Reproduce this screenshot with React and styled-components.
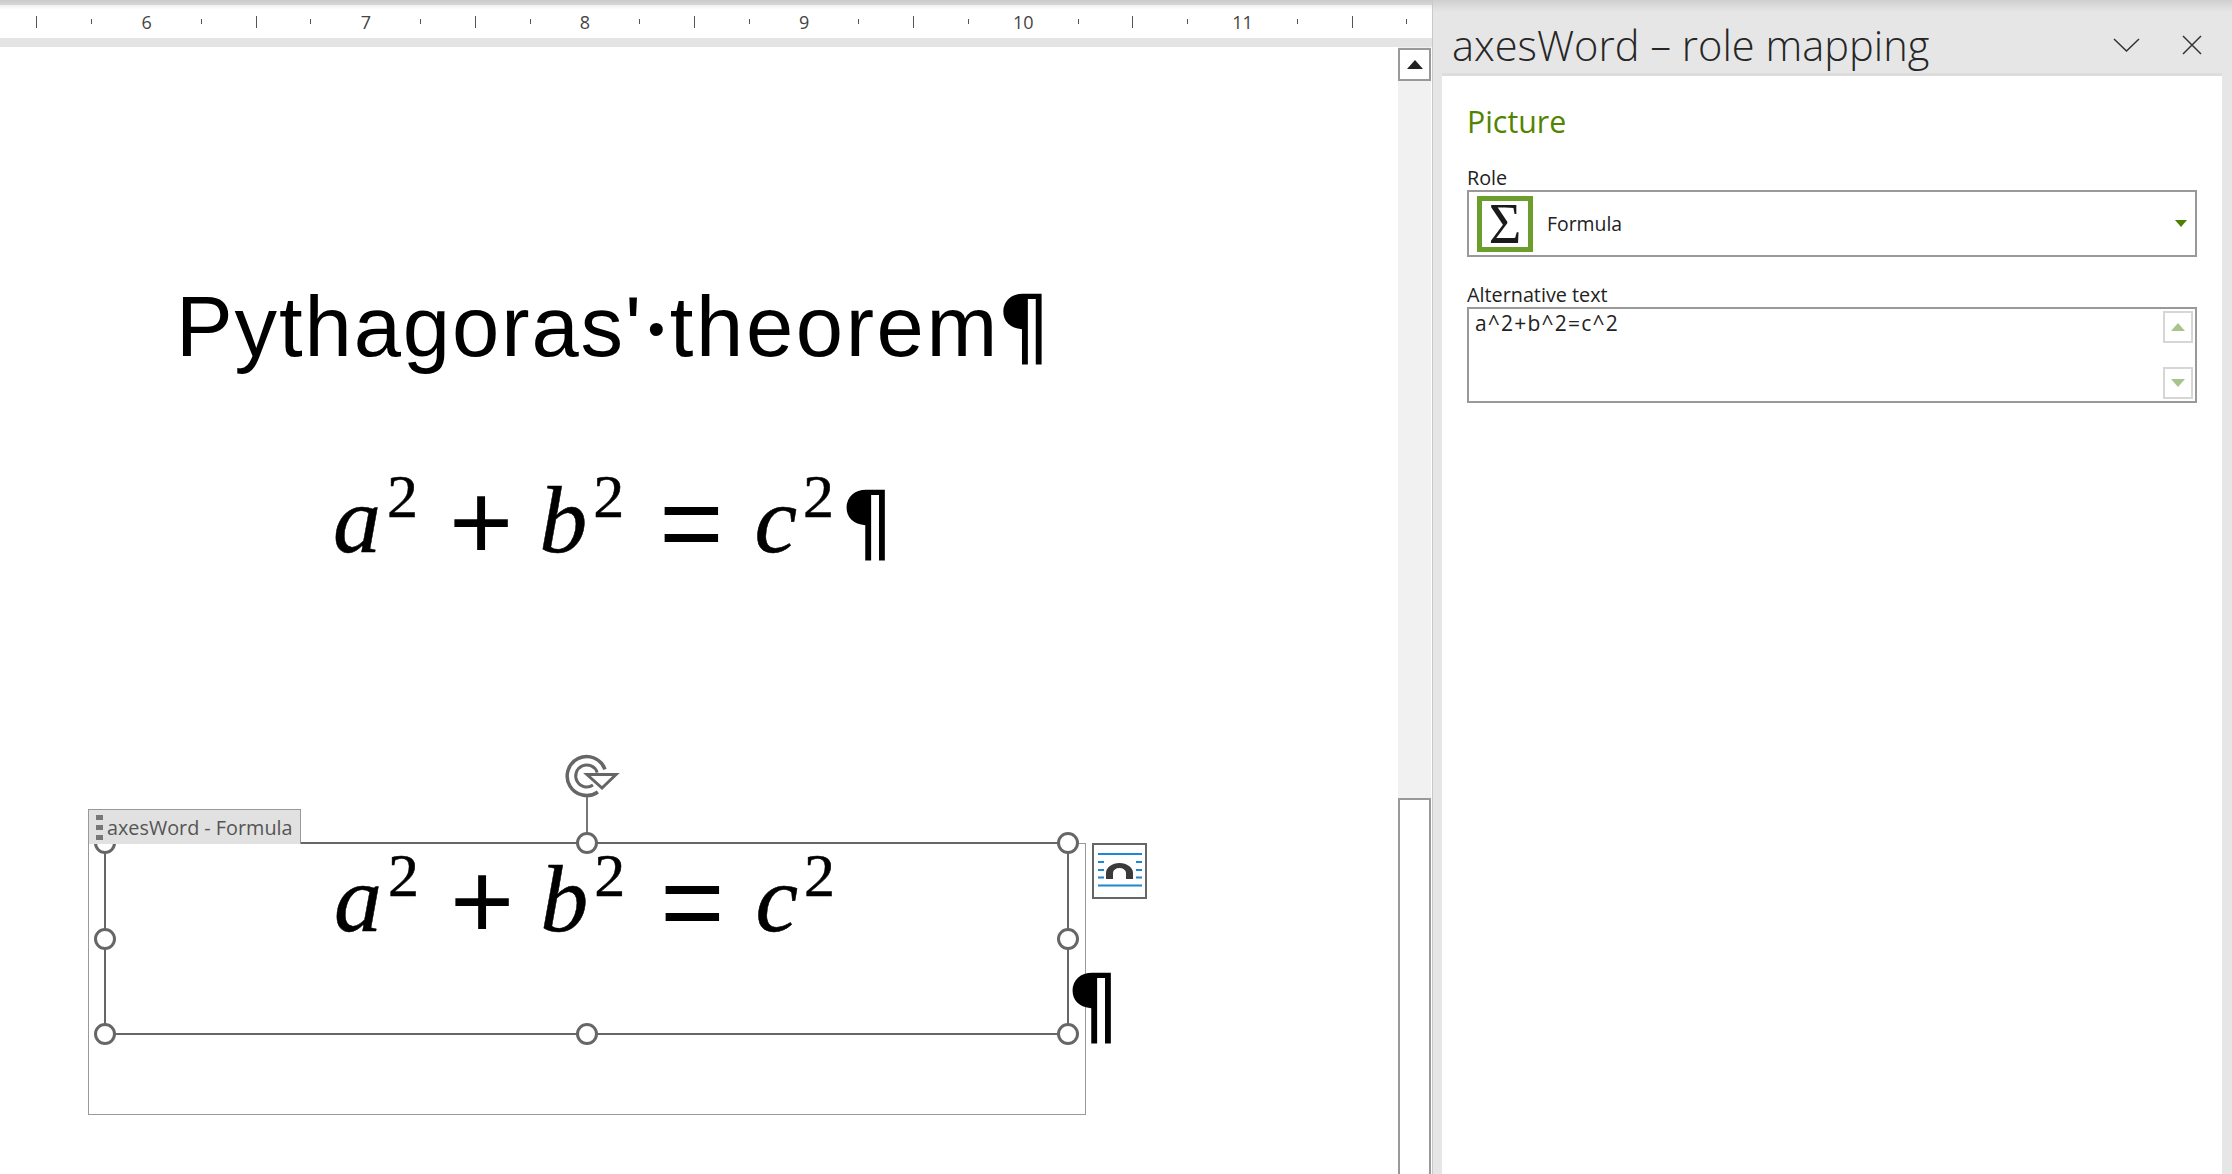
import styled, { createGlobalStyle } from 'styled-components';
import { Fragment } from 'react';

const UI_FONT = '"Open Sans", "Noto Sans", sans-serif';
const MATH_FONT = '"Liberation Serif", serif';

const GlobalStyle = createGlobalStyle`
  html, body {
    margin: 0;
    padding: 0;
    height: 100%;
    background: #fff;
    overflow: hidden;
  }
  #root {
    height: 100%;
  }
`;

const Shell = styled.div`
  display: flex;
  width: 2232px;
  height: 1174px;
  overflow: hidden;
  font-family: ${UI_FONT};
`;

const Main = styled.div`
  display: flex;
  flex-direction: column;
  width: 1432px;
  flex: none;
`;

const TopEdge = styled.div`
  height: 5px;
  background: linear-gradient(#cbcbcb, #d6d6d6);
`;

const Ruler = styled.div`
  display: grid;
  grid-template-columns: repeat(26, 54.8px);
  align-items: center;
  justify-items: center;
  height: 33px;
  padding-left: 9.6px;
  background: linear-gradient(#f0f0f0, #fff 5px);
`;

const MajorTick = styled.i`
  width: 1px;
  height: 12px;
  background: #555;
`;

const MinorTick = styled.i`
  width: 1px;
  height: 5px;
  background: #555;
`;

const RulerNumber = styled.span`
  font-size: 18px;
  line-height: 20px;
  color: #444;
`;

const RulerBand = styled.div`
  height: 9px;
  background: #e4e4e4;
`;

const Workspace = styled.div`
  display: flex;
  flex: 1;
  min-height: 0;
`;

const Page = styled.div`
  flex: 1;
  position: relative;
  background: #fff;
`;

const Heading = styled.div`
  padding: 0 0 0 176px;
  margin-top: 230px;
  font-family: "Liberation Sans", sans-serif;
  font-size: 85px;
  letter-spacing: 1.9px;
  line-height: 100px;
  color: #000;
  white-space: nowrap;
`;

const SpaceDot = styled.span`
  font-family: ${MATH_FONT};
  font-size: 80px;
  font-weight: 700;
  letter-spacing: 0;
`;

const HeadingTail = styled.span`
  letter-spacing: 2.6px;
`;

const Equation = styled.div`
  display: flex;
  align-items: baseline;
  margin-left: ${({ $left }) => $left}px;
  font-family: ${MATH_FONT};
  font-size: 92px;
  line-height: 100px;
  color: #000;
  white-space: nowrap;
  -webkit-text-stroke: 0.5px #000;
`;

const Var = styled.span`
  font-size: 96px;
  font-style: italic;
`;

const Sup = styled.span`
  font-size: 62px;
  position: relative;
  top: -35px;
  margin-left: ${({ $gap }) => $gap}px;
`;

const Op = styled.span`
  position: relative;
  top: 8px;
  margin: 0 ${({ $after }) => $after}px 0 ${({ $before }) => $before}px;
  font-family: "Liberation Sans", sans-serif;
  font-size: 110px;
  line-height: 0;
  -webkit-text-stroke: 0;
`;

const Pilcrow = styled.span`
  margin-left: ${({ $gap }) => $gap}px;
  font-family: "DejaVu Sans", sans-serif;
  font-size: 85px;
  font-style: normal;
  line-height: 0;
  letter-spacing: 0;
  -webkit-text-stroke: 0;
`;

const FirstEquation = styled.div`
  margin-top: 91px;
`;

const Control = styled.div`
  position: absolute;
  left: 88px;
  top: 796px;
  width: 998px;
  height: 272px;
  box-sizing: border-box;
  border: 1px solid #999;
`;

const ControlTag = styled.div`
  position: absolute;
  left: -1px;
  top: -35px;
  display: flex;
  align-items: center;
  box-sizing: border-box;
  width: 213px;
  height: 35px;
  padding-left: 7px;
  gap: 4px;
  background: #e1e1e1;
  border: 1px solid #999;
  border-bottom: 0;
  font-size: 19.8px;
  color: #555;
  z-index: 3;
`;

const Grip = styled.span`
  display: flex;
  flex-direction: column;
  gap: 5px;
  i {
    display: block;
    width: 7px;
    height: 5px;
    background: #777;
  }
`;

const Selection = styled.div`
  position: absolute;
  left: 15px;
  top: -2px;
  width: 965px;
  height: 193px;
  box-sizing: border-box;
  border: 2px solid #666;
`;

const HandleLayer = styled.div`
  position: absolute;
  inset: -1px;
`;

const Handle = styled.span`
  position: absolute;
  left: ${({ $x }) => $x}%;
  top: ${({ $y }) => $y}%;
  width: 22px;
  height: 22px;
  box-sizing: border-box;
  margin: -11px 0 0 -11px;
  border: 3.5px solid #666;
  border-radius: 50%;
  background: #fff;
  z-index: 2;
`;

const RotateStem = styled.span`
  position: absolute;
  left: 50%;
  top: -48px;
  width: 2px;
  height: 48px;
  margin-left: -1px;
  background: #777;
`;

const RotateIcon = styled.svg`
  position: absolute;
  left: 50%;
  top: -98px;
  margin-left: -36.7px;
  width: 80px;
  height: 60px;
`;

const BoxEquation = styled(Equation)`
  position: absolute;
  left: 228px;
  top: 5px;
  margin: 0;
`;

const LayoutButton = styled.svg`
  position: absolute;
  left: 1003px;
  top: -1px;
  width: 55px;
  height: 56px;
`;

const TrailingPilcrow = styled.span`
  position: absolute;
  left: 977px;
  top: 112px;
  font-family: "DejaVu Sans", sans-serif;
  font-size: 85px;
  line-height: 100px;
  color: #000;
`;

const ScrollTrack = styled.div`
  display: flex;
  flex-direction: column;
  width: 33px;
  background: #f1f1f1;
`;

const ScrollUp = styled.button`
  display: flex;
  align-items: center;
  justify-content: center;
  box-sizing: border-box;
  width: 33px;
  height: 33px;
  margin-top: 1px;
  padding: 0;
  background: #fff;
  border: 2px solid #999;
`;

const ScrollThumb = styled.div`
  box-sizing: border-box;
  width: 33px;
  flex: 1;
  margin-top: 717px;
  background: #fff;
  border: 2px solid #999;
  border-bottom: 0;
`;

const ScrollGap = styled.div`
  width: 1px;
  flex: none;
`;

const Panel = styled.aside`
  display: flex;
  flex-direction: column;
  flex: 1;
  background: linear-gradient(#cfcfcf, #e6e6e6 12px);
  border-left: 1px solid #c9c9c9;
`;

const PanelHeader = styled.header`
  display: flex;
  align-items: center;
  height: 73px;
  padding: 17px 0 0 19px;
  box-sizing: border-box;
`;

const PanelTitle = styled.h1`
  flex: 1;
  margin: 0;
  font-size: 41.6px;
  font-weight: 300;
  line-height: 50px;
  color: #262626;
  white-space: nowrap;
`;

const HeaderIcon = styled.svg`
  flex: none;
  margin-right: ${({ $gap }) => $gap}px;
`;

const PanelBody = styled.div`
  flex: 1;
  margin: 0 10px 0 9px;
  padding: 0 25px;
  background: #fff;
  border-top: 3px solid #dcdcdc;
`;

const SectionTitle = styled.h2`
  margin: 26px 0 0;
  font-size: 30.3px;
  font-weight: 400;
  line-height: 40px;
  color: #538400;
`;

const FieldLabel = styled.div`
  margin: ${({ $top }) => $top}px 0 1px;
  font-size: 19.8px;
  line-height: 23px;
  color: #222;
`;

const ComboBox = styled.div`
  display: flex;
  align-items: center;
  box-sizing: border-box;
  height: 67px;
  padding: 0 8px 0 8px;
  border: 2px solid #999;
  font-size: 19.4px;
  color: #222;
`;

const RoleIcon = styled.span`
  display: flex;
  align-items: center;
  justify-content: center;
  flex: none;
  box-sizing: border-box;
  width: 56px;
  height: 56px;
  margin-right: 14px;
  border: 5px solid #6b9e2d;
  font-family: ${MATH_FONT};
  font-size: 56px;
  line-height: 46px;
  color: #1a1a1a;
`;

const ComboValue = styled.span`
  flex: 1;
`;

const ComboArrow = styled.svg`
  flex: none;
`;

const TextArea = styled.div`
  display: flex;
  justify-content: space-between;
  box-sizing: border-box;
  height: 96px;
  padding: 2px 2px 2px 6px;
  border: 2px solid #999;
  font-size: 21px;
  letter-spacing: 1.2px;
  line-height: 26px;
  color: #222;
`;

const AltValue = styled.span`
  margin-top: -1px;
`;

const Spinner = styled.div`
  display: flex;
  flex-direction: column;
  justify-content: space-between;
`;

const SpinButton = styled.span`
  display: flex;
  align-items: center;
  justify-content: center;
  box-sizing: border-box;
  width: 30px;
  height: 32px;
  border: 2px solid #d6d6d6;
`;

const rulerItems = [];
const digits = { 2: '6', 6: '7', 10: '8', 14: '9', 18: '10', 22: '11' };
for (let i = 0; i < 26; i++) rulerItems.push(i);

const handles = [
  [0, 0], [50, 0], [100, 0],
  [0, 50], [100, 50],
  [0, 100], [50, 100], [100, 100],
];

const Formula = ({ pilcrow }) => (
  <>
    <Var>a</Var>
    <Sup $gap={6}>2</Sup>
    <Op $before={31} $after={26}>+</Op>
    <Var>b</Var>
    <Sup $gap={6}>2</Sup>
    <Op $before={35} $after={31}>=</Op>
    <Var>c</Var>
    <Sup $gap={6}>2</Sup>
    {pilcrow && <Pilcrow $gap={6}>¶</Pilcrow>}
  </>
);

const App = () => (
  <>
    <GlobalStyle />
    <Shell>
      <Main>
        <TopEdge />
        <Ruler>
          {rulerItems.map((i) => (
            <Fragment key={i}>
              {digits[i] ? (
                <RulerNumber>{digits[i]}</RulerNumber>
              ) : i % 2 === 0 ? (
                <MajorTick />
              ) : (
                <MinorTick />
              )}
            </Fragment>
          ))}
        </Ruler>
        <RulerBand />
        <Workspace>
          <Page>
            <Heading>
              Pythagoras'<SpaceDot>·</SpaceDot>
              <HeadingTail>theorem</HeadingTail>
              <Pilcrow $gap={-3}>¶</Pilcrow>
            </Heading>
            <FirstEquation>
              <Equation $left={333}>
                <Formula pilcrow />
              </Equation>
            </FirstEquation>
            <Control>
              <ControlTag>
                <Grip>
                  <i />
                  <i />
                  <i />
                </Grip>
                axesWord - Formula
              </ControlTag>
              <Selection>
                <HandleLayer>
                  <RotateStem />
                  <RotateIcon viewBox="0 0 80 60" fill="none" stroke="#666">
                    <path d="M55 24.300A19.500 19.500 0 1 0 47.900 47" strokeWidth="3.500" />
                    <path d="M47.200 27.600A11 11 0 1 0 43 40" strokeWidth="3" />
                    <path d="M37 29.500h29L52 43z" fill="#fff" strokeWidth="3" />
                  </RotateIcon>
                  {handles.map(([x, y]) => (
                    <Handle key={`${x}-${y}`} $x={x} $y={y} />
                  ))}
                </HandleLayer>
                <BoxEquation>
                  <Formula />
                </BoxEquation>
              </Selection>
              <LayoutButton viewBox="0 0 55 56">
                <rect x="1" y="1" width="53" height="54" fill="#fff" stroke="#666" strokeWidth="2" />
                <path d="M6 11h44M6 42.500h44" stroke="#1e88d0" strokeWidth="2" fill="none" />
                <path d="M6 19h6M6 27h6M6 34.500h6M44 19h6M44 27h6M44 34.500h6" stroke="#1e88d0" strokeWidth="2" fill="none" />
                <path d="M14 36v-6a13.500 10 0 0 1 27 0v6h-7v-6a6.500 5 0 0 0-13 0v6z" fill="#3a3a3a" />
              </LayoutButton>
              <TrailingPilcrow>¶</TrailingPilcrow>
            </Control>
          </Page>
          <ScrollTrack>
            <ScrollUp>
              <svg width="16" height="9" viewBox="0 0 16 9">
                <path d="M8 0l8 9H0z" fill="#222" />
              </svg>
            </ScrollUp>
            <ScrollThumb />
          </ScrollTrack>
          <ScrollGap />
        </Workspace>
      </Main>
      <Panel>
        <PanelHeader>
          <PanelTitle>axesWord – role mapping</PanelTitle>
          <HeaderIcon $gap={42} width="27" height="14" viewBox="0 0 27 14">
            <path d="M1 1l12.500 12L26 1" fill="none" stroke="#333" strokeWidth="1.500" />
          </HeaderIcon>
          <HeaderIcon $gap={30} width="20" height="20" viewBox="0 0 20 20">
            <path d="M1 1l18 18M19 1L1 19" fill="none" stroke="#333" strokeWidth="1.500" />
          </HeaderIcon>
        </PanelHeader>
        <PanelBody>
          <SectionTitle>Picture</SectionTitle>
          <FieldLabel $top={24}>Role</FieldLabel>
          <ComboBox>
            <RoleIcon>Σ</RoleIcon>
            <ComboValue>Formula</ComboValue>
            <ComboArrow width="12" height="7" viewBox="0 0 12 7">
              <path d="M0 0h12L6 7z" fill="#4f7f00" />
            </ComboArrow>
          </ComboBox>
          <FieldLabel $top={26}>Alternative text</FieldLabel>
          <TextArea>
            <AltValue>a^2+b^2=c^2</AltValue>
            <Spinner>
              <SpinButton>
                <svg width="14" height="8" viewBox="0 0 14 8">
                  <path d="M7 0l7 8H0z" fill="#a9c48a" />
                </svg>
              </SpinButton>
              <SpinButton>
                <svg width="14" height="8" viewBox="0 0 14 8">
                  <path d="M0 0h14L7 8z" fill="#a9c48a" />
                </svg>
              </SpinButton>
            </Spinner>
          </TextArea>
        </PanelBody>
      </Panel>
    </Shell>
  </>
);

export default App;
